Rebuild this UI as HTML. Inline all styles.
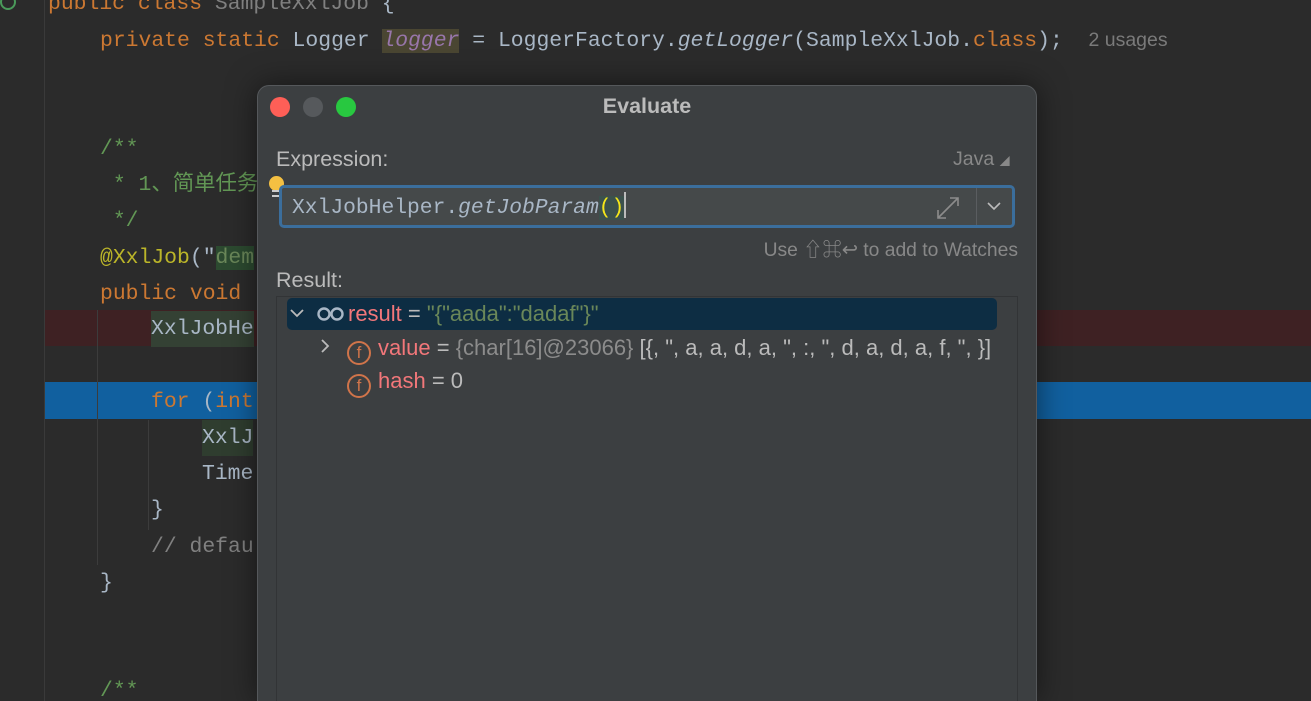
<!DOCTYPE html>
<html><head><meta charset="utf-8"><style>
*{margin:0;padding:0;box-sizing:border-box}
html,body{width:1311px;height:701px;overflow:hidden}
body{background:#2b2b2b;font-family:"Liberation Sans","Noto Sans CJK SC",sans-serif}
#wrap{position:relative;width:1311px;height:701px;overflow:hidden}
.code{position:absolute;left:0;top:0;width:1311px;height:701px;overflow:hidden;font-family:"Liberation Mono","Noto Sans CJK SC",monospace;font-size:21.4px;color:#a9b7c6}
.ln{position:absolute;left:100px;height:36px;line-height:36px;white-space:pre}
.k{color:#cc7832}.c{color:#629755}.a{color:#bbb529}.g{color:#808080}
.gut{position:absolute;left:44px;top:0;width:1px;height:701px;background:#3a3a3a}
.guide{position:absolute;width:1px;background:#3c3c3c}
.dlg{position:absolute;left:257px;top:85px;width:780px;height:616px;background:#3c3f41;border-radius:12px 12px 0 0;border:1px solid #55585b;border-bottom:none;box-shadow:0 0 30px rgba(0,0,0,.5)}
.dot{position:absolute;top:11px;width:20px;height:20px;border-radius:50%}
.lbl{position:absolute;font-size:21.5px;color:#bbbbbb}
.tree{position:absolute;left:18px;top:210px;width:742px;height:406px;border:1px solid #323436;border-bottom:none;background:#3c3f41}
.row{position:absolute;font-size:22px;white-space:pre;line-height:32px;height:32px}
.fi{display:inline-block;width:24px;height:24px;border:2px solid #d0744a;border-radius:50%;color:#d0744a;font-size:17px;line-height:20px;text-align:center;vertical-align:-3px;margin-right:7px}
.r{color:#f2777a}.s{color:#6a8759}.gr{color:#8c8c8c}
</style></head><body><div id="wrap">
<div class="code">
<div class="gut"></div>
<div style="position:absolute;left:45px;top:310px;width:1266px;height:36px;background:#3e2123"></div>
<div style="position:absolute;left:45px;top:382px;width:1266px;height:37px;background:#11609f"></div>
<div class="guide" style="left:97px;top:310px;height:255px"></div>
<div class="guide" style="left:148px;top:420px;height:110px"></div>
<div style="position:absolute;left:0;top:-6px;width:16px;height:16px;border:2px solid #4a9a5a;border-radius:50%"></div>
<div class="ln" style="left:48px;top:-14px"><span class="k">public class</span> <span class="g">SampleXxlJob</span> {</div>
<div class="ln" style="top:22px"><span class="k">private static</span> Logger <span style="color:#9876aa;font-style:italic;background:#4a4632;">logger</span> = LoggerFactory.<i>getLogger</i>(SampleXxlJob.<span class="k">class</span>);  <span style="font-family:'Liberation Sans',sans-serif;color:#7a7a7a;font-size:19.5px">2 usages</span></div>
<div class="ln c" style="top:131px">/**</div>
<div class="ln c" style="top:167px"> * 1、简单任务</div>
<div class="ln c" style="top:203px"> */</div>
<div class="ln" style="top:240px"><span class="a">@XxlJob</span>("<span class="s" style="background:#2c4a30">dem</span></div>
<div class="ln k" style="top:276px">public void</div>
<div class="ln" style="left:151px;top:311px;background:#344134">XxlJobHe</div>
<div class="ln k" style="left:151px;top:384px">for <span style="color:#a9b7c6">(</span>int</div>
<div class="ln" style="left:202px;top:420px;background:#2f3d2f">XxlJ</div>
<div class="ln" style="left:202px;top:456px">Time</div>
<div class="ln" style="left:151px;top:492px">}</div>
<div class="ln g" style="left:151px;top:529px">// defau</div>
<div class="ln" style="top:565px">}</div>
<div class="ln c" style="top:673px">/**</div>
</div>
<div class="dlg">
<div class="dot" style="left:12px;background:#fe5f57"></div>
<div class="dot" style="left:45px;background:#56595c"></div>
<div class="dot" style="left:78px;background:#28c840"></div>
<div style="position:absolute;left:0;width:100%;top:8px;text-align:center;font-weight:bold;font-size:21.5px;color:#bbbbbb">Evaluate</div>
<div class="lbl" style="left:18px;top:61px">Expression:</div>
<div class="lbl" style="left:695px;top:62px;color:#888;font-size:19.5px">Java <span style="font-size:10px">◢</span></div>
<div style="position:absolute;left:11px;top:90px;width:15px;height:15px;border-radius:50%;background:#f4c042"></div>
<div style="position:absolute;left:14px;top:104px;width:8px;height:7px;border-top:2px solid #ccc;border-bottom:2px solid #ccc"></div>
<div style="position:absolute;left:21px;top:99px;width:736px;height:43px;border:3px solid #3b6e9c;border-radius:5px;background:#45494a">
<div style="position:absolute;left:10px;top:4px;font-family:'Liberation Mono',monospace;font-size:21.3px;line-height:30px;color:#a9b7c6;white-space:pre">XxlJobHelper.<i>getJobParam</i><span style="color:#f5e61a;background:#3b514d">()</span><span style="display:inline-block;width:2px;height:26px;background:#bbb;vertical-align:-5px"></span></div>
<svg style="position:absolute;left:652px;top:6px" width="28" height="28" viewBox="0 0 28 28" fill="none" stroke="#8c8c8c" stroke-width="1.6"><path d="M4 24L24 4M16 4h8v8M4 16v8h8"/></svg>
<div style="position:absolute;left:694px;top:0;width:1px;height:37px;background:#5a5d60"></div>
<svg style="position:absolute;left:704px;top:12px" width="16" height="12" viewBox="0 0 16 12" fill="none" stroke="#bbb" stroke-width="1.6"><path d="M2 3l6 6 6-6"/></svg>
</div>
<div class="lbl" style="right:18px;top:148px;font-size:19.3px;color:#888">Use ⇧⌘↩ to add to Watches</div>
<div class="lbl" style="left:18px;top:182px">Result:</div>
<div class="tree">
<div style="position:absolute;left:10px;top:1px;width:710px;height:32px;background:#0d2d43;border-radius:5px"></div>
<svg style="position:absolute;left:12px;top:11px" width="16" height="12" viewBox="0 0 16 12" fill="none" stroke="#bbb" stroke-width="1.8"><path d="M2 2l6 6 6-6"/></svg>
<svg style="position:absolute;left:40px;top:9px" width="28" height="16" viewBox="0 0 28 16" fill="none" stroke="#a9b7c6" stroke-width="2.4"><circle cx="7" cy="8" r="5.5"/><circle cx="20" cy="8" r="5.5"/></svg>
<div class="row" style="left:71px;top:1px"><span class="r">result</span> <span style="color:#bbb">=</span> <span class="s">"{"aada":"dadaf"}"</span></div>
<svg style="position:absolute;left:42px;top:41px" width="12" height="16" viewBox="0 0 12 16" fill="none" stroke="#bbb" stroke-width="1.8"><path d="M3 2l6 6-6 6"/></svg>
<div class="row" style="left:70px;top:35px"><span class="fi">f</span><span class="r">value</span> <span style="color:#bbb">=</span> <span class="gr">{char[16]@23066}</span> <span style="color:#bbb">[{, ", a, a, d, a, ", :, ", d, a, d, a, f, ", }]</span></div>
<div class="row" style="left:70px;top:68px"><span class="fi">f</span><span class="r">hash</span> <span style="color:#bbb">= 0</span></div>
</div>
</div>
</div></body></html>
